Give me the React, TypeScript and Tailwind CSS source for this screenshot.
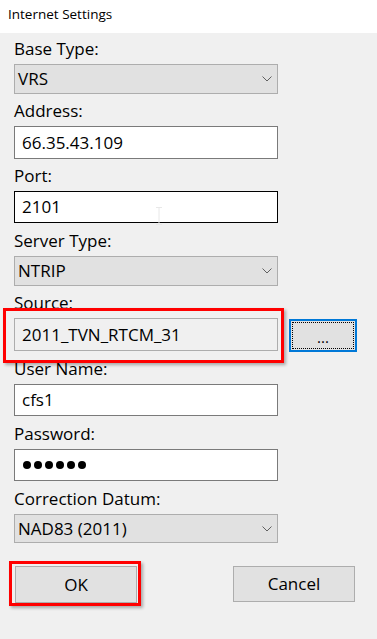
import React from 'react'

const font = { fontFamily: '"Open Sans", "Noto Sans", "Liberation Sans", sans-serif' }

const Chevron = () => (
    <svg width="10" height="6" viewBox="0 0 10 6" className="shrink-0">
        <polyline points="0.5,0.5 5,5 9.5,0.5" fill="none" stroke="#606060" strokeWidth="1" />
    </svg>
)

const Label = ({ children, className = '' }: { children: React.ReactNode; className?: string }) => (
    <div className={`h-[22px] leading-[22px] text-[17px] text-black ${className}`}>{children}</div>
)

const Combo = ({ value, h }: { value: string; h: string }) => (
    <div className={`mt-[4px] w-[264px] ${h} bg-[#e1e1e1] border border-[#adadad] flex items-center justify-between pl-[3px] pr-[5px] text-[17px] text-black`}>
        <span>{value}</span>
        <Chevron />
    </div>
)

const TextBox = ({ children, h, border = 'border-[#7a7a7a]' }: { children: React.ReactNode; h: string; border?: string }) => (
    <div className={`mt-[4px] w-[264px] ${h} bg-white border ${border} flex items-center pl-[7px] text-[17px] text-black`}>
        {children}
    </div>
)

export default function App() {
    return (
        <div style={font} className="relative w-[377px] h-[639px] bg-[#f0f0f0] overflow-hidden">
            <div className="h-[33px] bg-white pl-[8px] pt-[5px] text-[13.5px] leading-[18px] text-black">Internet Settings</div>

            <div className="pl-[14px] pt-[5px] flex flex-col">
                <Label>Base Type:</Label>
                <Combo value="VRS" h="h-[30px]" />

                <Label className="mt-[6px]">Address:</Label>
                <TextBox h="h-[33px]">66.35.43.109</TextBox>

                <Label className="mt-[6px]">Port:</Label>
                <TextBox h="h-[32px]" border="border-black">2101</TextBox>

                <Label className="mt-[7px]">Server Type:</Label>
                <Combo value="NTRIP" h="h-[30px]" />

                <Label className="mt-[6px]">Source:</Label>
                <div className="mt-[4px] flex items-start gap-[11px]">
                    <div className="w-[264px] h-[33px] bg-[#f0f0f0] border border-[#adadad] flex items-center pl-[7px] text-[17px] text-black">
                        2011_TVN_RTCM_31
                    </div>
                    <button className="mt-[1px] w-[68px] h-[33px] bg-[#e1e1e1] border-2 border-[#0078d7] p-[1px]">
                        <div className="w-full h-full border border-dotted border-black flex items-end justify-center pb-[4px]">
                            <span className="text-[15px] leading-[14px] text-black">...</span>
                        </div>
                    </button>
                </div>

                <Label className="mt-[6px]">User Name:</Label>
                <TextBox h="h-[32px]">cfs1</TextBox>

                <Label className="mt-[7px]">Password:</Label>
                <TextBox h="h-[32px]">
                    <div className="flex gap-[3px] pl-[1px]">
                        {[0, 1, 2, 3, 4, 5].map(i => (
                            <span key={i} className="w-[8px] h-[8px] rounded-full bg-black" />
                        ))}
                    </div>
                </TextBox>

                <Label className="mt-[7px]">Correction Datum:</Label>
                <Combo value="NAD83 (2011)" h="h-[29px]" />

                <div className="mt-[23px] flex items-start">
                    <button className="ml-[1px] w-[122px] h-[37px] bg-[#e1e1e1] border border-[#adadad] text-[17px] text-black">OK</button>
                    <button className="ml-[96px] w-[122px] h-[36px] bg-[#e1e1e1] border border-[#adadad] text-[17px] text-black">Cancel</button>
                </div>
            </div>

            {/* highlight boxes */}
            <div className="absolute left-[3px] top-[308px] w-[281px] h-[55px] border-[3px] border-[#ff0000] shadow-[2px_2px_3px_rgba(0,0,0,0.3)]" />
            <div className="absolute left-[9px] top-[561px] w-[132px] h-[45px] border-[3px] border-[#ff0000] shadow-[2px_2px_3px_rgba(0,0,0,0.3)]" />

            {/* mouse I-beam cursor */}
            <svg className="absolute left-[155px] top-[207px]" width="8" height="18" viewBox="0 0 8 18">
                <path d="M1 0.5 H7 M4 0.5 V17.5 M1 17.5 H7" stroke="#e8e8e8" strokeWidth="1" fill="none" />
            </svg>
        </div>
    )
}
